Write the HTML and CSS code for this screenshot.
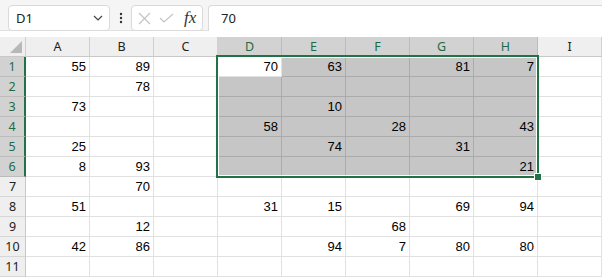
FILE: index.html
```html
<!DOCTYPE html>
<html lang="en">
<head>
    <meta charset="UTF-8">
    <title>Sheet</title>
    <link rel="stylesheet" href="styles.css">
</head>
<body>

    <div class="toolbar">
        <div class="name-box">
            <span>D1</span>
            <svg width="10" height="6" viewBox="0 0 10 6"><polyline points="1,1 5,5 9,1" fill="none" stroke="#444" stroke-width="1.2"/></svg>
        </div>
        <svg class="dots" width="4" height="12" viewBox="0 0 4 12"><circle cx="2" cy="2" r="1.2" fill="#333"/><circle cx="2" cy="6" r="1.2" fill="#333"/><circle cx="2" cy="10" r="1.2" fill="#333"/></svg>
        <div class="fx-box">
            <svg width="13" height="13" viewBox="0 0 13 13"><path d="M1 1 L12 12 M12 1 L1 12" stroke="#c4c4c4" stroke-width="1.2" fill="none"/></svg>
            <svg width="15" height="10" viewBox="0 0 15 10"><polyline points="1,5 5,9 14,1" stroke="#c4c4c4" stroke-width="1.2" fill="none"/></svg>
            <span class="fx">fx</span>
        </div>
        <div class="formula">70</div>
    </div>

    <div class="sheet">
        <div class="corner"></div>
        <div class="ch">A</div><div class="ch">B</div><div class="ch">C</div>
        <div class="ch on">D</div><div class="ch on">E</div><div class="ch on">F</div><div class="ch on">G</div><div class="ch on">H</div>
        <div class="ch">I</div>

        <div class="rh on">1</div>
        <div class="cell">55</div><div class="cell">89</div><div class="cell"></div>
        <div class="cell">70</div><div class="cell sel">63</div><div class="cell sel"></div><div class="cell sel">81</div><div class="cell sel">7</div>
        <div class="cell"></div>

        <div class="rh on">2</div>
        <div class="cell"></div><div class="cell">78</div><div class="cell"></div>
        <div class="cell sel"></div><div class="cell sel"></div><div class="cell sel"></div><div class="cell sel"></div><div class="cell sel"></div>
        <div class="cell"></div>

        <div class="rh on">3</div>
        <div class="cell">73</div><div class="cell"></div><div class="cell"></div>
        <div class="cell sel"></div><div class="cell sel">10</div><div class="cell sel"></div><div class="cell sel"></div><div class="cell sel"></div>
        <div class="cell"></div>

        <div class="rh on">4</div>
        <div class="cell"></div><div class="cell"></div><div class="cell"></div>
        <div class="cell sel">58</div><div class="cell sel"></div><div class="cell sel">28</div><div class="cell sel"></div><div class="cell sel">43</div>
        <div class="cell"></div>

        <div class="rh on">5</div>
        <div class="cell">25</div><div class="cell"></div><div class="cell"></div>
        <div class="cell sel"></div><div class="cell sel">74</div><div class="cell sel"></div><div class="cell sel">31</div><div class="cell sel"></div>
        <div class="cell"></div>

        <div class="rh on">6</div>
        <div class="cell">8</div><div class="cell">93</div><div class="cell"></div>
        <div class="cell sel"></div><div class="cell sel"></div><div class="cell sel"></div><div class="cell sel"></div><div class="cell sel">21</div>
        <div class="cell"></div>

        <div class="rh">7</div>
        <div class="cell"></div><div class="cell">70</div><div class="cell"></div>
        <div class="cell"></div><div class="cell"></div><div class="cell"></div><div class="cell"></div><div class="cell"></div>
        <div class="cell"></div>

        <div class="rh">8</div>
        <div class="cell">51</div><div class="cell"></div><div class="cell"></div>
        <div class="cell">31</div><div class="cell">15</div><div class="cell"></div><div class="cell">69</div><div class="cell">94</div>
        <div class="cell"></div>

        <div class="rh">9</div>
        <div class="cell"></div><div class="cell">12</div><div class="cell"></div>
        <div class="cell"></div><div class="cell"></div><div class="cell">68</div><div class="cell"></div><div class="cell"></div>
        <div class="cell"></div>

        <div class="rh">10</div>
        <div class="cell">42</div><div class="cell">86</div><div class="cell"></div>
        <div class="cell"></div><div class="cell">94</div><div class="cell">7</div><div class="cell">80</div><div class="cell">80</div>
        <div class="cell"></div>

        <div class="rh">11</div>
        <div class="cell"></div><div class="cell"></div><div class="cell"></div>
        <div class="cell"></div><div class="cell"></div><div class="cell"></div><div class="cell"></div><div class="cell"></div>
        <div class="cell"></div>

        <!-- selection D1:H6 -->
        <div class="selection"><div class="handle"></div></div>
    </div>

</body>
</html>
```

FILE: styles.css
```css
body {
    margin: 0;
    padding: 0;
    background-color: #ffffff;
    font-family: "Liberation Sans", Arial, sans-serif;
    overflow: hidden;
}

.toolbar {
    display: flex;
    align-items: flex-start;
    height: 31px;
    padding-top: 5px;
    box-sizing: border-box;
    background-color: #f5f5f5;
    border-bottom: 1px solid #e0e0e0;
}

.name-box {
    display: flex;
    align-items: center;
    justify-content: space-between;
    margin-left: 8px;
    width: 102px;
    height: 26px;
    padding: 0 6px 0 7px;
    box-sizing: border-box;
    background-color: white;
    border: 1px solid #dadada;
    border-radius: 4px;
    font-family: "Noto Sans", sans-serif;
    font-size: 13px;
    color: #222;
}

.dots {
    margin: 7px 0 0 9px;
}

.fx-box {
    display: flex;
    align-items: center;
    margin-left: 8px;
    width: 72px;
    height: 26px;
    padding-left: 6px;
    gap: 8px;
    box-sizing: border-box;
    background-color: white;
    border: 1px solid #dadada;
    border-radius: 4px;
}

.fx {
    font-family: "Liberation Serif", serif;
    font-style: italic;
    font-size: 17px;
    color: #333;
    margin-left: 2px;
}

.formula {
    flex: 1;
    margin-left: 5px;
    height: 26px;
    line-height: 24px;
    padding-left: 12px;
    box-sizing: border-box;
    background-color: white;
    border: 1px solid #dadada;
    border-right: none;
    border-radius: 4px 0 0 0;
    border-bottom: none;
    font-family: "Noto Sans", sans-serif;
    font-size: 13px;
    color: #222;
}

.sheet {
    position: relative;
    display: grid;
    grid-template-columns: 26px repeat(8, 64px) 1fr;
    grid-template-rows: 20px repeat(11, 20px);
    margin-top: 6px;
    background-color: white;
}

.sheet > div {
    box-sizing: border-box;
}

.corner {
    position: relative;
    background-color: #efefef;
    border-right: 1px solid #d0d0d0;
    border-bottom: 1px solid #c8c8c8;
}

.corner::after {
    content: "";
    position: absolute;
    right: 3px;
    bottom: 3px;
    border-left: 12px solid transparent;
    border-bottom: 12px solid #b8b8b8;
}

.ch {
    background-color: #efefef;
    border-right: 1px solid #d0d0d0;
    border-bottom: 1px solid #c8c8c8;
    text-align: center;
    line-height: 19px;
    font-family: "Noto Sans", sans-serif;
    font-size: 12.5px;
    color: #222;
}

.ch.on {
    background-color: #d2d2d2;
    color: #1e6a44;
    border-right-color: #bcbcbc;
    border-bottom: 2px solid #217346;
}

.rh {
    background-color: #efefef;
    border-right: 1px solid #c8c8c8;
    border-bottom: 1px solid #d6d6d6;
    text-align: center;
    line-height: 19px;
    font-family: "Noto Sans", sans-serif;
    font-size: 12.5px;
    color: #222;
}

.rh.on {
    background-color: #d2d2d2;
    color: #1e6a44;
    border-right: 2px solid #217346;
    border-bottom-color: #bcbcbc;
}

.cell {
    border-right: 1px solid #e1e1e1;
    border-bottom: 1px solid #e1e1e1;
    text-align: right;
    padding-right: 3px;
    line-height: 19px;
    font-size: 13px;
    color: #000;
}

.cell.sel {
    background-color: #c6c6c6;
    border-right-color: #ababab;
    border-bottom-color: #ababab;
}

.selection {
    position: absolute;
    left: 216px;
    top: 18px;
    width: 323px;
    height: 123px;
    border: 2px solid #217346;
    box-shadow: inset 0 0 0 1px #ffffff;
    box-sizing: border-box;
    pointer-events: none;
}

.handle {
    position: absolute;
    right: -5px;
    bottom: -5px;
    width: 6px;
    height: 6px;
    background-color: #217346;
    border: 1px solid #ffffff;
}
```
